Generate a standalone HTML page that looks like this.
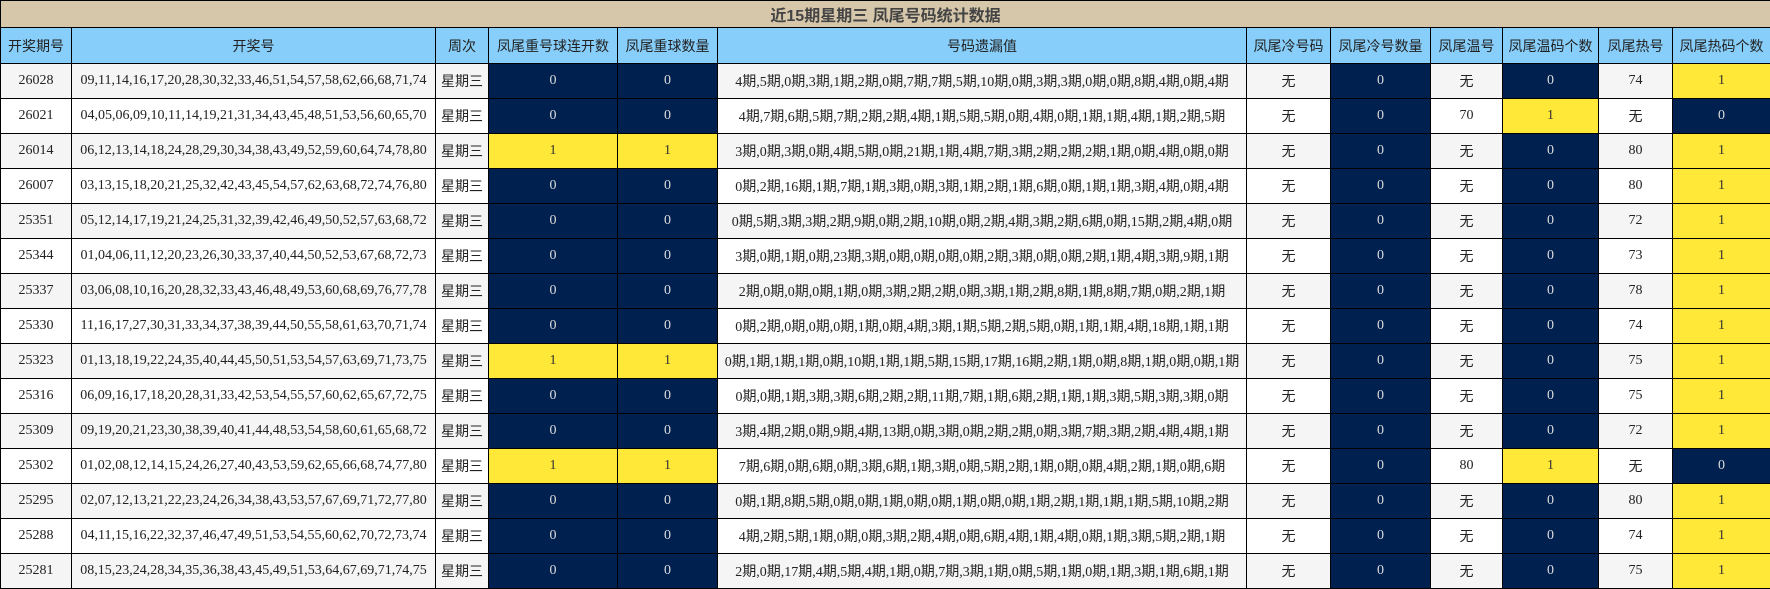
<!DOCTYPE html>
<html><head><meta charset="utf-8"><style>
body{margin:0;background:#fff;}
table{border-collapse:collapse;table-layout:fixed;width:1770px;font-family:"Liberation Serif","Noto Sans CJK SC",serif;font-size:14px;color:#222;}
td,th{border:1px solid #000;text-align:center;padding:0;white-space:nowrap;overflow:hidden;}
.t td{height:26px;background:#d6c7ab;font-weight:bold;font-size:16px;color:#444;font-family:"Liberation Sans","Noto Sans CJK SC",sans-serif;}
.h th{height:35px;background:#87cefa;font-weight:normal;font-family:"Liberation Sans","Noto Sans CJK SC",sans-serif;font-size:14px;color:#222;}
tbody tr td{height:34px;}
tr.a td{background:#f5f5f5;} tr.b td{background:#fff;}
tr td.n{background:#002050;color:#ddd;}
tr td.y{background:#ffe838;color:#333;}
.w{font-family:"Liberation Sans","Noto Sans CJK SC",sans-serif;}
</style></head><body>
<table>
<colgroup><col style="width:71px"><col style="width:364px"><col style="width:53px"><col style="width:129px"><col style="width:100px"><col style="width:529px"><col style="width:84px"><col style="width:100px"><col style="width:72px"><col style="width:96px"><col style="width:74px"><col style="width:98px"></colgroup>
<tr class="t"><td colspan="12">近15期星期三 凤尾号码统计数据</td></tr>
<tr class="h"><th>开奖期号</th><th>开奖号</th><th>周次</th><th>凤尾重号球连开数</th><th>凤尾重球数量</th><th>号码遗漏值</th><th>凤尾冷号码</th><th>凤尾冷号数量</th><th>凤尾温号</th><th>凤尾温码个数</th><th>凤尾热号</th><th>凤尾热码个数</th></tr>
<tbody>
<tr class="a"><td>26028</td><td>09,11,14,16,17,20,28,30,32,33,46,51,54,57,58,62,66,68,71,74</td><td class="w">星期三</td><td class="n">0</td><td class="n">0</td><td>4期,5期,0期,3期,1期,2期,0期,7期,7期,5期,10期,0期,3期,3期,0期,0期,8期,4期,0期,4期</td><td class="w">无</td><td class="n">0</td><td class="w">无</td><td class="n">0</td><td>74</td><td class="y">1</td></tr>
<tr class="b"><td>26021</td><td>04,05,06,09,10,11,14,19,21,31,34,43,45,48,51,53,56,60,65,70</td><td class="w">星期三</td><td class="n">0</td><td class="n">0</td><td>4期,7期,6期,5期,7期,2期,2期,4期,1期,5期,5期,0期,4期,0期,1期,1期,4期,1期,2期,5期</td><td class="w">无</td><td class="n">0</td><td>70</td><td class="y">1</td><td class="w">无</td><td class="n">0</td></tr>
<tr class="a"><td>26014</td><td>06,12,13,14,18,24,28,29,30,34,38,43,49,52,59,60,64,74,78,80</td><td class="w">星期三</td><td class="y">1</td><td class="y">1</td><td>3期,0期,3期,0期,4期,5期,0期,21期,1期,4期,7期,3期,2期,2期,2期,1期,0期,4期,0期,0期</td><td class="w">无</td><td class="n">0</td><td class="w">无</td><td class="n">0</td><td>80</td><td class="y">1</td></tr>
<tr class="b"><td>26007</td><td>03,13,15,18,20,21,25,32,42,43,45,54,57,62,63,68,72,74,76,80</td><td class="w">星期三</td><td class="n">0</td><td class="n">0</td><td>0期,2期,16期,1期,7期,1期,3期,0期,3期,1期,2期,1期,6期,0期,1期,1期,3期,4期,0期,4期</td><td class="w">无</td><td class="n">0</td><td class="w">无</td><td class="n">0</td><td>80</td><td class="y">1</td></tr>
<tr class="a"><td>25351</td><td>05,12,14,17,19,21,24,25,31,32,39,42,46,49,50,52,57,63,68,72</td><td class="w">星期三</td><td class="n">0</td><td class="n">0</td><td>0期,5期,3期,3期,2期,9期,0期,2期,10期,0期,2期,4期,3期,2期,6期,0期,15期,2期,4期,0期</td><td class="w">无</td><td class="n">0</td><td class="w">无</td><td class="n">0</td><td>72</td><td class="y">1</td></tr>
<tr class="b"><td>25344</td><td>01,04,06,11,12,20,23,26,30,33,37,40,44,50,52,53,67,68,72,73</td><td class="w">星期三</td><td class="n">0</td><td class="n">0</td><td>3期,0期,1期,0期,23期,3期,0期,0期,0期,0期,2期,3期,0期,0期,2期,1期,4期,3期,9期,1期</td><td class="w">无</td><td class="n">0</td><td class="w">无</td><td class="n">0</td><td>73</td><td class="y">1</td></tr>
<tr class="a"><td>25337</td><td>03,06,08,10,16,20,28,32,33,43,46,48,49,53,60,68,69,76,77,78</td><td class="w">星期三</td><td class="n">0</td><td class="n">0</td><td>2期,0期,0期,0期,1期,0期,3期,2期,2期,0期,3期,1期,2期,8期,1期,8期,7期,0期,2期,1期</td><td class="w">无</td><td class="n">0</td><td class="w">无</td><td class="n">0</td><td>78</td><td class="y">1</td></tr>
<tr class="b"><td>25330</td><td>11,16,17,27,30,31,33,34,37,38,39,44,50,55,58,61,63,70,71,74</td><td class="w">星期三</td><td class="n">0</td><td class="n">0</td><td>0期,2期,0期,0期,0期,1期,0期,4期,3期,1期,5期,2期,5期,0期,1期,1期,4期,18期,1期,1期</td><td class="w">无</td><td class="n">0</td><td class="w">无</td><td class="n">0</td><td>74</td><td class="y">1</td></tr>
<tr class="a"><td>25323</td><td>01,13,18,19,22,24,35,40,44,45,50,51,53,54,57,63,69,71,73,75</td><td class="w">星期三</td><td class="y">1</td><td class="y">1</td><td>0期,1期,1期,1期,0期,10期,1期,1期,5期,15期,17期,16期,2期,1期,0期,8期,1期,0期,0期,1期</td><td class="w">无</td><td class="n">0</td><td class="w">无</td><td class="n">0</td><td>75</td><td class="y">1</td></tr>
<tr class="b"><td>25316</td><td>06,09,16,17,18,20,28,31,33,42,53,54,55,57,60,62,65,67,72,75</td><td class="w">星期三</td><td class="n">0</td><td class="n">0</td><td>0期,0期,1期,3期,3期,6期,2期,2期,11期,7期,1期,6期,2期,1期,1期,3期,5期,3期,3期,0期</td><td class="w">无</td><td class="n">0</td><td class="w">无</td><td class="n">0</td><td>75</td><td class="y">1</td></tr>
<tr class="a"><td>25309</td><td>09,19,20,21,23,30,38,39,40,41,44,48,53,54,58,60,61,65,68,72</td><td class="w">星期三</td><td class="n">0</td><td class="n">0</td><td>3期,4期,2期,0期,9期,4期,13期,0期,3期,0期,2期,2期,0期,3期,7期,3期,2期,4期,4期,1期</td><td class="w">无</td><td class="n">0</td><td class="w">无</td><td class="n">0</td><td>72</td><td class="y">1</td></tr>
<tr class="b"><td>25302</td><td>01,02,08,12,14,15,24,26,27,40,43,53,59,62,65,66,68,74,77,80</td><td class="w">星期三</td><td class="y">1</td><td class="y">1</td><td>7期,6期,0期,6期,0期,3期,6期,1期,3期,0期,5期,2期,1期,0期,0期,4期,2期,1期,0期,6期</td><td class="w">无</td><td class="n">0</td><td>80</td><td class="y">1</td><td class="w">无</td><td class="n">0</td></tr>
<tr class="a"><td>25295</td><td>02,07,12,13,21,22,23,24,26,34,38,43,53,57,67,69,71,72,77,80</td><td class="w">星期三</td><td class="n">0</td><td class="n">0</td><td>0期,1期,8期,5期,0期,0期,1期,0期,0期,1期,0期,0期,1期,2期,1期,1期,1期,5期,10期,2期</td><td class="w">无</td><td class="n">0</td><td class="w">无</td><td class="n">0</td><td>80</td><td class="y">1</td></tr>
<tr class="b"><td>25288</td><td>04,11,15,16,22,32,37,46,47,49,51,53,54,55,60,62,70,72,73,74</td><td class="w">星期三</td><td class="n">0</td><td class="n">0</td><td>4期,2期,5期,1期,0期,0期,3期,2期,4期,0期,6期,4期,1期,4期,0期,1期,3期,5期,2期,1期</td><td class="w">无</td><td class="n">0</td><td class="w">无</td><td class="n">0</td><td>74</td><td class="y">1</td></tr>
<tr class="a"><td>25281</td><td>08,15,23,24,28,34,35,36,38,43,45,49,51,53,64,67,69,71,74,75</td><td class="w">星期三</td><td class="n">0</td><td class="n">0</td><td>2期,0期,17期,4期,5期,4期,1期,0期,7期,3期,1期,0期,5期,1期,0期,1期,3期,1期,6期,1期</td><td class="w">无</td><td class="n">0</td><td class="w">无</td><td class="n">0</td><td>75</td><td class="y">1</td></tr>
</tbody></table>
</body></html>
